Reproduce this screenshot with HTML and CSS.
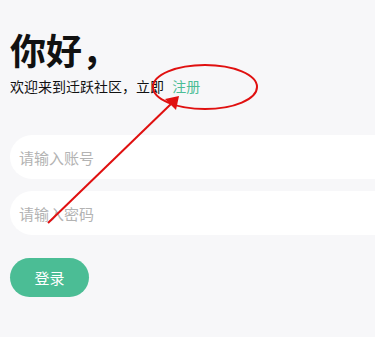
FILE: index.html
```html
<!DOCTYPE html>
<html lang="zh-CN">
  <head>
    <meta charset="UTF-8" />
    <meta name="viewport" content="width=device-width, initial-scale=1.0" />
    <title>登录</title>
    <link rel="stylesheet" href="styles.css">
  </head>
  <body>
    <div class="page">
      <h1 class="title">你好，</h1>
      <p class="welcome">欢迎来到迁跃社区，立即 <a class="link" href="#">注册</a></p>

      <form class="form">
        <input class="field" type="text" placeholder="请输入账号" />
        <input class="field" type="password" placeholder="请输入密码" />
        <button class="btn-login" type="button">登录</button>
      </form>
    </div>

    <!-- annotation drawn over the screenshot -->
    <svg class="markup" width="375" height="337" viewBox="0 0 375 337">
      <ellipse cx="205" cy="87" rx="52" ry="22" fill="none" stroke="#e01010" stroke-width="2" />
      <line x1="48" y1="223" x2="172" y2="103" stroke="#e01010" stroke-width="2" />
      <polygon points="179,96 176,110 165,99" fill="#e01010" />
    </svg>
  </body>
</html>
```

FILE: styles.css
```css
* {
  margin: 0;
  padding: 0;
  box-sizing: border-box;
  font-family: 'Noto Sans CJK SC', 'Noto Sans', sans-serif;
}

body {
  background: #f7f7f9;
  width: 375px;
  height: 337px;
  overflow: hidden;
  position: relative;
}

.page {
  padding: 24px 0 0 10px;
  overflow: hidden;
}

.title {
  font-size: 36px;
  font-weight: 700;
  line-height: 50px;
  color: #111;
}

.welcome {
  font-size: 14px;
  line-height: 20px;
  color: #111;
  margin-top: 2px;
}

.link {
  color: #4bbd95;
  text-decoration: none;
  margin-left: 5px;
}

.form {
  display: flex;
  flex-direction: column;
  align-items: flex-start;
  gap: 12px;
  margin-top: 39px;
}

.field {
  width: 100%;
  margin-right: -30px;
  height: 44px;
  border: none;
  border-radius: 22px 0 0 22px;
  background: #fff;
  padding: 0 9px;
  font-size: 15px;
  color: #333;
  outline: none;
}

.field::placeholder {
  color: #b3b3b3;
}

.btn-login {
  margin-top: 11px;
  width: 79px;
  height: 39px;
  border: none;
  border-radius: 20px;
  background: #4bbd95;
  color: #fff;
  font-size: 15px;
  cursor: pointer;
}

.markup {
  position: absolute;
  top: 0;
  left: 0;
  pointer-events: none;
}
```
